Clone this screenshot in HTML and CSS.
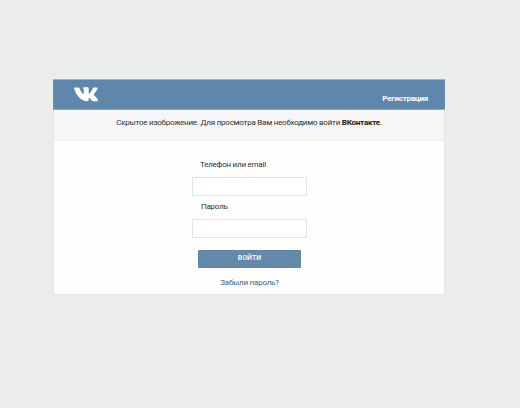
FILE: index.html
```html
<!DOCTYPE html>
<html lang="ru">
<head>
<meta charset="utf-8">
<title>ВКонтакте</title>
<link rel="stylesheet" href="styles.css">
</head>
<body>
<main class="card">
  <header class="header">
    <svg class="logo" viewBox="0 0 24 15" aria-hidden="true">
      <path d="M.9.4h3.6q.8 0 1.1.8c.9 2.4 2 4.500 3.200 5.600.7.6 1 .2 1-.8V3.200C9.800 1.800 9.200 1.500 8.700 1.200 8.900.6 9.800.3 11.200.3h2.300c.9 0 1.200.4 1.200 1.400v4.100c0 .8.5 1 1.100.4 1.200-1.200 2.200-3.100 2.900-4.800.3-.7.6-1 1.400-1h2.800c.9 0 1.100.5.8 1.200-.6 1.700-2.300 3.700-3.700 5.300-.5.6-.4.9.1 1.400 1.400 1.400 2.900 2.800 3.800 4.500.4.9 0 1.500-.9 1.500h-3.200c-1.900 0-3-2.500-4.300-3.400-.6-.4-.9-.1-.9.7v1.500c0 .8-.3 1.200-1.500 1.200C6.400 14.300 2 8 .2 1.600Q-.1.4.9.4Z"/>
    </svg>
    <a class="register">Регистрация</a>
  </header>
  <p class="notice">Скрытое изоброжение. Для просмотра Вам необходимо войти <b>ВКонтакте</b>.</p>
  <form class="form">
    <label class="label" for="login">Телефон или email</label>
    <input class="field" id="login" type="text">
    <label class="label label-password" for="password">Пароль</label>
    <input class="field" id="password" type="password">
    <button class="submit" type="button">ВОЙТИ</button>
    <a class="forgot">Забыли пароль?</a>
  </form>
</main>
</body>
</html>
```
FILE: styles.css
```css
* { box-sizing: border-box; }
body {
  margin: 0;
  padding: 79px 0 0 53px;
  background: #ebedeb;
  color: #303030;
  font: 8px/10px Roboto, sans-serif;
  letter-spacing: -.23px;
}
.card {
  width: 392px;
  height: 216px;
  background: #fefefe;
  border: 1px solid #e4e7e7;
  border-top: 0;
}
.header {
  display: flex;
  justify-content: space-between;
  height: 31px;
  margin: 0 -1px;
  padding: 8px 16px 0 19.5px;
  background: #5f87ab;
  border: 1px solid #668caf;
  border-top-color: #a0b6c7;
  border-bottom-color: #8ba8c2;
}
.logo { width: 24px; height: 15px; fill: #fff; margin-top: -1px; }
.register { color: #fff; font-weight: 700; margin-top: 6px; }
.notice {
  height: 31px;
  margin: 0;
  padding-top: 8px;
  text-align: center;
  white-space: nowrap;
  background: #f6f6f6;
  border-bottom: 1px solid #eeefef;
}
.notice b { color: #161616; }
.form {
  display: flex;
  flex-direction: column;
  width: 115px;
  margin: 19px 0 0 138px;
}
.label { padding-left: 8px; }
.label-password { padding-left: 9px; margin-top: 6px; }
.field {
  width: 115px;
  height: 19px;
  margin: 7px 0 0;
  padding: 0 4px;
  border: 1px solid #dbe7ea;
  background: #fff;
  outline: 0;
  font: inherit;
}
.submit {
  width: 103px;
  height: 18px;
  margin: 12px 0 0 6px;
  padding: 0 0 1px;
  border: 1px solid #5d84a5;
  border-radius: 1px;
  background: #6389ab;
  color: #fff;
  font: 500 7px/15px Roboto, sans-serif;
}
.forgot { margin-top: 10px; text-align: center; color: #3d648b; }
```
